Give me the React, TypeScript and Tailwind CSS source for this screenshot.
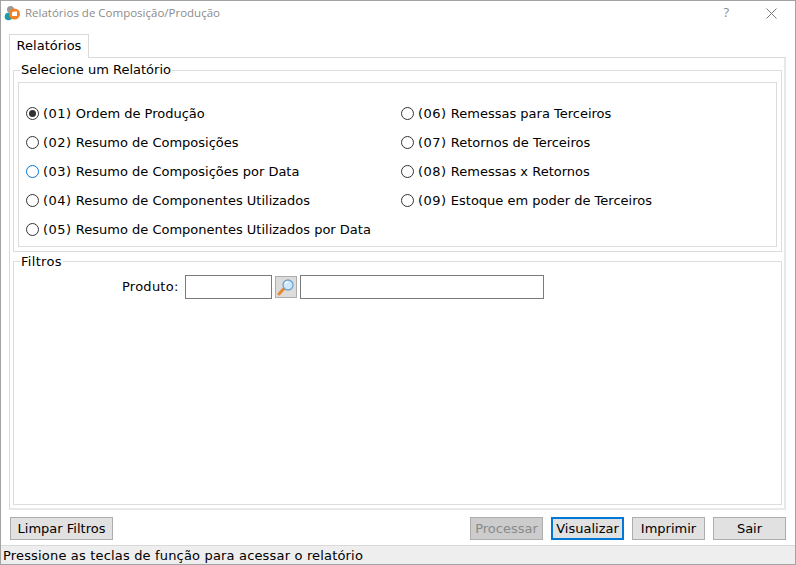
const fontClass = "font-['DejaVu_Sans','Verdana',sans-serif]";

const leftReports = [
  ["(01)", "Ordem de Produção"],
  ["(02)", "Resumo de Composições"],
  ["(03)", "Resumo de Composições por Data"],
  ["(04)", "Resumo de Componentes Utilizados"],
  ["(05)", "Resumo de Componentes Utilizados por Data"],
];

const rightReports = [
  ["(06)", "Remessas para Terceiros"],
  ["(07)", "Retornos de Terceiros"],
  ["(08)", "Remessas x Retornos"],
  ["(09)", "Estoque em poder de Terceiros"],
];

function Radio({
  code,
  label,
  checked,
  hover,
}: {
  code: string;
  label: string;
  checked?: boolean;
  hover?: boolean;
}) {
  return (
    <div className="flex h-[29px] items-center gap-[4px]">
      <span
        className={`flex h-[13px] w-[13px] items-center justify-center rounded-full border bg-white ${
          hover ? "border-[#0078d7]" : "border-[#333333]"
        }`}
      >
        {checked && <span className="h-[7px] w-[7px] rounded-full bg-[#333333]" />}
      </span>
      <span className="whitespace-nowrap">
        <span className="tracking-[0.5px]">{code}</span> {label}
      </span>
    </div>
  );
}

function AppIcon() {
  return (
    <svg width="18" height="18" viewBox="0 0 18 18" aria-hidden>
      <circle cx="7.5" cy="5.5" r="3.5" fill="#9a9a9a" />
      <circle cx="5.5" cy="12.5" r="3.8" fill="#1f9aa8" />
      <circle cx="11.5" cy="10" r="5.5" fill="#f58220" />
      <path d="M9 8.5 L11 7.5 L14 7.5 L14 12 L9 12 Z" fill="#ffffff" />
    </svg>
  );
}

function SearchIcon() {
  return (
    <svg width="18" height="18" viewBox="0 0 18 18" aria-hidden>
      <path d="M2 16 L7 10.5" stroke="#e8892c" strokeWidth="3" strokeLinecap="round" />
      <circle cx="11" cy="7" r="5" fill="#cfe8fb" stroke="#6fa3cf" strokeWidth="1.3" />
      <path d="M8 6 A3.4 3.4 0 0 1 11 3.6" stroke="#ffffff" strokeWidth="1.3" fill="none" />
    </svg>
  );
}

function Button({
  children,
  className = "",
  disabled,
}: {
  children: string;
  className?: string;
  disabled?: boolean;
}) {
  return (
    <button
      type="button"
      disabled={disabled}
      className={`h-[23px] text-[13px] leading-none ${
        disabled ? "border border-[#adadad] bg-[#cccccc] text-[#8a8a8a]" : "bg-[#e1e1e1] text-black"
      } ${className}`}
    >
      {children}
    </button>
  );
}

export default function App() {
  return (
    <div
      className={`flex h-[565px] w-[796px] flex-col overflow-hidden border border-[#a3a3a3] bg-white text-[13px] text-black ${fontClass}`}
    >
      <header className="flex h-[24px] shrink-0 items-center pl-[2px] pr-[18px]">
        <AppIcon />
        <span className="ml-[4px] font-['Open_Sans',sans-serif] text-[11.5px] text-[#8c8c8c]">
          Relatórios de Composição/Produção
        </span>
        <span className="ml-auto font-['Open_Sans',sans-serif] text-[13px] text-[#8c8c8c]">?</span>
        <svg className="ml-[37px]" width="11" height="11" viewBox="0 0 11 11" aria-hidden>
          <path d="M0.5 0.5 L10.5 10.5 M10.5 0.5 L0.5 10.5" stroke="#7a7a7a" strokeWidth="1" />
        </svg>
      </header>

      <main className="flex min-h-0 flex-1 flex-col pl-[8px] pr-[9px] pt-[9px]">
        <div className="z-10 -mb-px flex h-[24px] w-[80px] items-center justify-center border border-b-0 border-[#d9d9d9] bg-white pb-[2px]">
          Relatórios
        </div>
        <div className="flex h-[453px] flex-col border-b-2 border-l border-r-2 border-t border-b-[#e8e8e8] border-l-[#d9d9d9] border-r-[#e8e8e8] border-t-[#d9d9d9] pb-[3px] pl-[3px] pr-[2px]">
          <fieldset className="mt-[4px] h-[190px] border border-[#dcdcdc] px-[4px]">
            <legend className="ml-[2px] px-[1px] leading-[16px]">Selecione um Relatório</legend>
            <div className="mt-[4px] flex h-[165px] border border-[#dcdcdc] px-[7px] pt-[16px]">
              <div className="w-[375px]">
                {leftReports.map(([code, label], i) => (
                  <Radio key={code} code={code} label={label} checked={i === 0} hover={i === 2} />
                ))}
              </div>
              <div>
                {rightReports.map(([code, label]) => (
                  <Radio key={code} code={code} label={label} />
                ))}
              </div>
            </div>
          </fieldset>
          <fieldset className="mt-[1px] min-h-0 flex-1 border border-[#dcdcdc]">
            <legend className="ml-[6px] px-[1px] leading-[16px]">
              <span className="block translate-y-px tracking-[0.3px]">Filtros</span>
            </legend>
            <div className="mt-[6px] flex items-center">
              <span className="ml-[108px] w-[57px] whitespace-nowrap tracking-[0.25px]">Produto:</span>
              <span className="ml-[6px] h-[24px] w-[87px] border border-[#7a7a7a] bg-white" />
              <span className="ml-[3px] flex h-[22px] w-[22px] items-center justify-center border border-[#adadad] bg-[#dcdcdc]">
                <SearchIcon />
              </span>
              <span className="ml-[3px] h-[24px] w-[244px] border border-[#7a7a7a] bg-white" />
            </div>
          </fieldset>
        </div>

        <div className="mt-[7px] flex items-center gap-[8px] pl-[1px]">
          <Button className="mr-auto w-[103px] border border-[#adadad]">Limpar Filtros</Button>
          <Button disabled className="w-[73px]">
            Processar
          </Button>
          <Button className="w-[73px] border-2 border-[#0078d7]">Visualizar</Button>
          <Button className="w-[73px] border border-[#adadad]">Imprimir</Button>
          <Button className="w-[73px] border border-[#adadad]">Sair</Button>
        </div>
      </main>

      <footer className="flex h-[19px] shrink-0 items-center border-t border-[#dadada] bg-[#eeeeee] pl-[2px] pt-px tracking-[0.17px]">
        Pressione as teclas de função para acessar o relatório
      </footer>
    </div>
  );
}
